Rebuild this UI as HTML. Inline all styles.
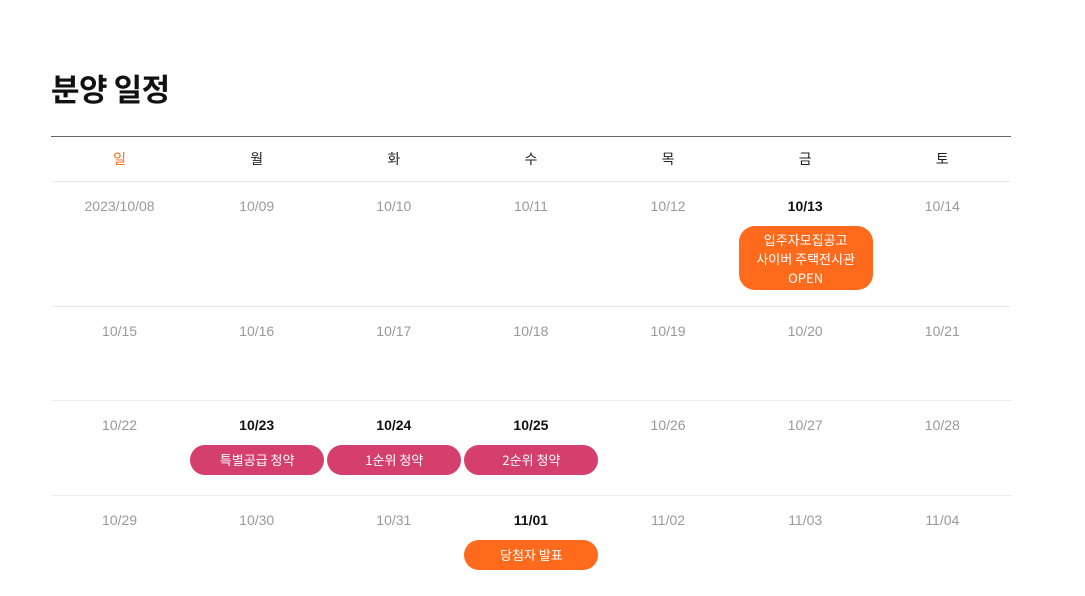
<!DOCTYPE html>
<html><head><meta charset="utf-8"><style>
body{margin:0;background:#fff;font-family:"Liberation Sans","Noto Sans CJK KR",sans-serif;width:1085px;height:587px;overflow:hidden;position:relative}
h1{position:absolute;left:51px;top:68px;margin:0;font-size:31px;font-weight:700;color:#111;font-family:"Noto Sans CJK KR",sans-serif;line-height:40px;letter-spacing:-0.5px}
.t{position:absolute;left:51px;top:136px;width:960px;border-top:1px solid #666}
.row{display:flex;border-bottom:1px solid #ebebeb;position:relative}
.c{width:137.14px;text-align:center;position:relative}
.hd .c{height:44px;line-height:44px;font-size:14px;color:#222;font-family:"Noto Sans CJK KR",sans-serif}
.d{font-size:14px;color:#999;margin-top:14px;line-height:20px}
.b{color:#111;font-weight:700}
.p{position:absolute;left:2px;width:134px;height:30px;border-radius:15px;background:#d43f6d;color:#fff;font-size:13px;line-height:30px;text-align:center;font-family:"Noto Sans CJK KR",sans-serif}
.o{background:#ff6a1c}
</style></head><body>
<h1>분양 일정</h1>
<div class="t">
<div class="row hd"><div class="c" style="color:#ff6a1c">일</div><div class="c">월</div><div class="c">화</div><div class="c">수</div><div class="c">목</div><div class="c">금</div><div class="c">토</div></div>
<div class="row" style="height:124px"><div class="c"><div class="d">2023/10/08</div></div><div class="c"><div class="d">10/09</div></div><div class="c"><div class="d">10/10</div></div><div class="c"><div class="d">10/11</div></div><div class="c"><div class="d">10/12</div></div><div class="c"><div class="d b">10/13</div><div class="p o" style="top:44px;height:64px;line-height:19px;border-radius:16px;padding-top:4px;box-sizing:border-box">입주자모집공고<br>사이버 주택전시관<br>OPEN</div></div><div class="c"><div class="d">10/14</div></div></div>
<div class="row" style="height:93px"><div class="c"><div class="d">10/15</div></div><div class="c"><div class="d">10/16</div></div><div class="c"><div class="d">10/17</div></div><div class="c"><div class="d">10/18</div></div><div class="c"><div class="d">10/19</div></div><div class="c"><div class="d">10/20</div></div><div class="c"><div class="d">10/21</div></div></div>
<div class="row" style="height:94px"><div class="c"><div class="d">10/22</div></div><div class="c"><div class="d b">10/23</div><div class="p" style="top:44px">특별공급 청약</div></div><div class="c"><div class="d b">10/24</div><div class="p" style="top:44px">1순위 청약</div></div><div class="c"><div class="d b">10/25</div><div class="p" style="top:44px">2순위 청약</div></div><div class="c"><div class="d">10/26</div></div><div class="c"><div class="d">10/27</div></div><div class="c"><div class="d">10/28</div></div></div>
<div class="row" style="height:100px;border:0"><div class="c"><div class="d">10/29</div></div><div class="c"><div class="d">10/30</div></div><div class="c"><div class="d">10/31</div></div><div class="c"><div class="d b">11/01</div><div class="p o" style="top:44px">당첨자 발표</div></div><div class="c"><div class="d">11/02</div></div><div class="c"><div class="d">11/03</div></div><div class="c"><div class="d">11/04</div></div></div>
</div>
</body></html>
